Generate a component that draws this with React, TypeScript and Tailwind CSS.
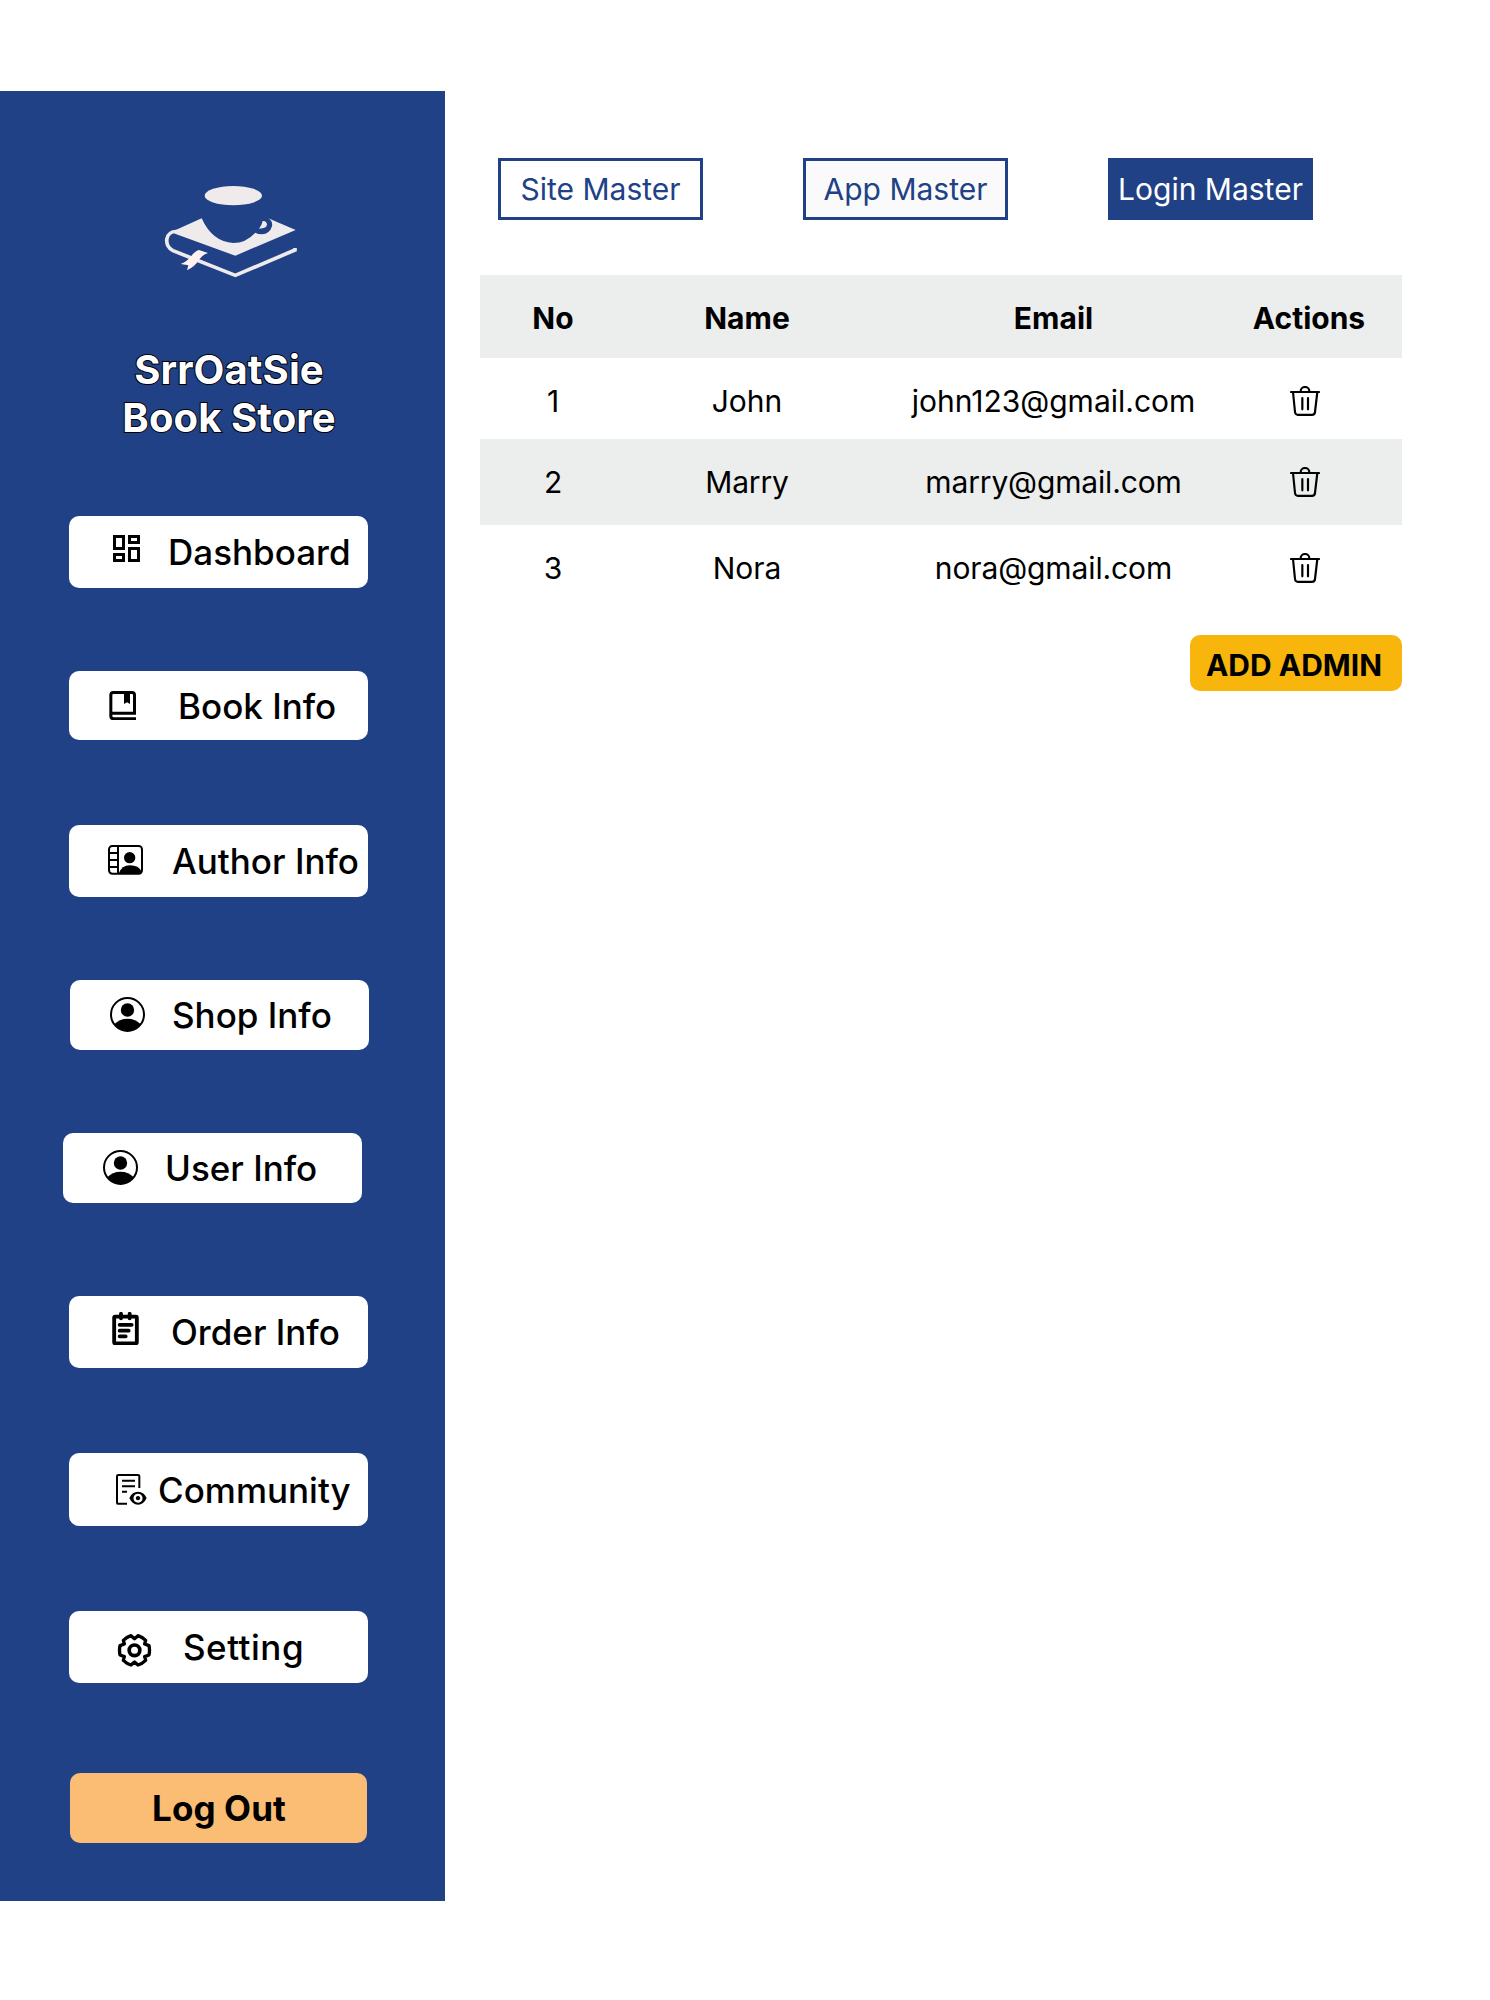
import type { ReactNode } from 'react';

function Logo() {
  return (
    <svg viewBox="0 0 411 291" className="ml-[163px] mt-[93px] h-[97px] w-[137px] shrink-0" fill="#efebec">
      <ellipse cx="211" cy="35" rx="86" ry="29" />
      <path d="M116 103L38 138Q30 142 36 149L217 215L398 138L316 103Q330 112 327 127Q320 150 297 151Q284 151 277 146Q248 177 211 177Q148 174 116 103Z" />
      <path d="M299 111Q310 110 312 121Q312 134 288 134Q296 125 299 111Z" />
      <path d="M45 143C4 138 2 188 30 200L217 274L396 198V192" fill="none" stroke="#efebec" strokeWidth="11" />
      <path d="M108 198L135 207Q118 212 107 228Q98 246 72 259L76 244L53 240Q74 231 85 216Q95 202 108 198Z" fill="#fff2f1" />
    </svg>
  );
}

function DashboardIcon() {
  return (
    <svg viewBox="3 3 18 18" className="h-[27px] w-[27px]">
      <path d="M19 5v2h-4V5h4M9 5v6H5V5h4m10 8v6h-4v-6h4M9 17v2H5v-2h4M21 3h-8v6h8V3zM11 3H3v10h8V3zm10 8h-8v10h8V11zm-10 4H3v6h8v-6z" />
    </svg>
  );
}

function BookIcon() {
  return (
    <svg viewBox="0 0 81 90" className="h-[30px] w-[27px]">
      <path d="M81 86H13Q5.500 86 5.500 78V15Q5.500 7.500 13 7.500H69Q76.500 7.500 76.500 15V69.500H6" fill="none" stroke="black" strokeWidth="9" />
      <path d="M45 8h18v34l-9 -5l-9 5z" />
    </svg>
  );
}

function AuthorIcon() {
  return (
    <svg viewBox="0 0 105 90" className="h-[30px] w-[35px]">
      <g fill="none" stroke="black" strokeWidth="6">
        <rect x="3" y="3" width="99" height="83" rx="10" />
        <path d="M30 3V86M2 24H30M2 45H30M2 66H30" />
      </g>
      <circle cx="65" cy="38" r="17" />
      <path d="M32 86Q41 61 66 61Q92 61 101 80L94 87Z" />
    </svg>
  );
}

function PersonIcon() {
  return (
    <svg viewBox="0 0 105 105" className="h-[35px] w-[35px]">
      <circle cx="52.500" cy="52.500" r="49.500" fill="none" stroke="black" strokeWidth="6" />
      <circle cx="52.500" cy="39" r="20" />
      <path d="M13 82Q28 65 52.500 65Q77 65 92 82A50 50 0 0 1 13 82Z" />
    </svg>
  );
}

function OrderIcon() {
  return (
    <svg viewBox="0 0 81 99" className="h-[33px] w-[27px]" fill="none" stroke="black" strokeWidth="11.500" strokeLinecap="round">
      <rect x="6.500" y="14" width="68" height="80" rx="3" />
      <path d="M27 5.500V19M53 5.500V19M23 38.500H59M23 56H50M23 73H41" />
    </svg>
  );
}

function CommunityIcon() {
  return (
    <svg viewBox="0 0 93 93" className="h-[31px] w-[31px]">
      <path d="M33 89.500H7Q3 89.500 3 86V6Q3 3 7 3H66Q70 3 70 6V42M18 20.500H57M18 37H57M18 53.500H33" fill="none" stroke="black" strokeWidth="6" />
      <path fillRule="evenodd" d="M40 72Q49 53 66 53Q83 53 92 72Q83 92 66 92Q49 92 40 72ZM66 59a13.500 13.500 0 1 0 .1 0ZM66 66a6.500 6.500 0 1 1 -.1 0Z" />
    </svg>
  );
}

function SettingIcon() {
  return (
    <svg viewBox="0 0 105 102" className="h-[34px] w-[35px]" fill="none" stroke="black" strokeWidth="10" strokeLinejoin="round">
      <path d="M96 35Q99 49 96 63L83 68L86 79Q76 89 63 93L52.500 84L42 93Q29 89 19 79L22 68L9 63Q6 49 9 35L22 30L19 19Q29 9 42 5L52.500 14L63 5Q76 9 86 19L83 30Z" />
      <circle cx="52.500" cy="49" r="16" strokeWidth="11" />
    </svg>
  );
}

function TrashIcon() {
  return (
    <svg viewBox="0 0 90 90" className="h-[30px] w-[30px]" fill="none" stroke="black" strokeWidth="6.500" strokeLinecap="round">
      <path d="M3 18H87M32 16a13 13 0 0 1 26 0M9 18L15 78Q16 86.500 24 86.500H66Q74 86.500 75 78L82 18M37 36V70M54 36V70" />
    </svg>
  );
}

type NavItemProps = {
  box: string;
  iconPlace: string;
  labelPlace: string;
  icon: ReactNode;
  label: string;
};

function NavItem({ box, iconPlace, labelPlace, icon, label }: NavItemProps) {
  return (
    <a className={`flex w-[299px] shrink-0 items-center rounded-[10px] bg-white ${box}`}>
      <span className={`shrink-0 self-start ${iconPlace}`}>{icon}</span>
      <span className={`whitespace-nowrap text-[35px] font-medium ${labelPlace}`}>{label}</span>
    </a>
  );
}

const navItems: NavItemProps[] = [
  { label: 'Dashboard', icon: <DashboardIcon />, box: 'ml-[69px] mt-[75px] h-[72px]', iconPlace: 'ml-[44px] mt-[19px]', labelPlace: 'ml-7' },
  { label: 'Book Info', icon: <BookIcon />, box: 'ml-[69px] mt-[83px] h-[69px]', iconPlace: 'ml-[40px] mt-[19px]', labelPlace: 'ml-[42px] pt-px' },
  { label: 'Author Info', icon: <AuthorIcon />, box: 'ml-[69px] mt-[85px] h-[72px]', iconPlace: 'ml-[39px] mt-[20px]', labelPlace: 'ml-[29px]' },
  { label: 'Shop Info', icon: <PersonIcon />, box: 'ml-[70px] mt-[83px] h-[70px]', iconPlace: 'ml-[40px] mt-[17px]', labelPlace: 'ml-[27px]' },
  { label: 'User Info', icon: <PersonIcon />, box: 'ml-[63px] mt-[83px] h-[70px]', iconPlace: 'ml-[40px] mt-[17px]', labelPlace: 'ml-[27px]' },
  { label: 'Order Info', icon: <OrderIcon />, box: 'ml-[69px] mt-[93px] h-[72px]', iconPlace: 'ml-[43px] mt-[16px]', labelPlace: 'ml-[32px]' },
  { label: 'Community', icon: <CommunityIcon />, box: 'ml-[69px] mt-[85px] h-[73px]', iconPlace: 'ml-[47px] mt-[21px]', labelPlace: 'ml-[11px] pt-px' },
  { label: 'Setting', icon: <SettingIcon />, box: 'ml-[69px] mt-[85px] h-[72px]', iconPlace: 'ml-[48px] mt-[23px]', labelPlace: 'ml-[31px] tracking-[0.5px]' },
];

const admins = [
  { no: 1, name: 'John', email: 'john123@gmail.com', row: 'h-[81px] pt-[5px]' },
  { no: 2, name: 'Marry', email: 'marry@gmail.com', row: 'h-[86px] bg-[#eceeed] tracking-[-0.15px]' },
  { no: 3, name: 'Nora', email: 'nora@gmail.com', row: 'h-[86px] tracking-[-0.12px]' },
];

export default function App() {
  return (
    <div className="flex h-[2000px] w-[1490px] items-start bg-white pt-[91px] font-['Inter',sans-serif] text-black">
      <aside className="flex h-[1810px] w-[445px] shrink-0 flex-col items-start bg-[#204186]">
        <Logo />
        <h1 className="mt-[65px] mb-[-1px] w-[458px] shrink-0 text-center text-[40px] leading-[48px] font-bold tracking-[0.1px] text-white [-webkit-text-stroke:2px_black] [paint-order:stroke_fill]">
          SrrOatSie
          <br />
          Book Store
        </h1>
        {navItems.map((item) => (
          <NavItem key={item.label} {...item} />
        ))}
        <button className="ml-[70px] mt-[90px] flex h-[70px] w-[297px] shrink-0 items-center rounded-[10px] bg-[#fbbc74] pl-[82px] text-[35px] font-bold tracking-[0.1px]">
          Log Out
        </button>
      </aside>

      <main className="ml-[35px] flex w-[922px] flex-col pt-[67px]">
        <div className="flex gap-[100px] pl-[18px] text-[30px] text-[#204186]">
          <button className="h-[62px] w-[205px] border-3 border-[#204186] bg-white whitespace-nowrap">Site Master</button>
          <button className="h-[62px] w-[205px] border-3 border-[#204186] bg-[#fafafb] whitespace-nowrap">App Master</button>
          <button className="h-[62px] w-[205px] bg-[#204186] whitespace-nowrap text-white">Login Master</button>
        </div>

        <div className="mt-[55px] text-center text-[30px]">
          <div className="grid h-[83px] grid-cols-[146px_242px_371px_140px] items-center bg-[#eceeed] pt-1 font-bold">
            <span>No</span>
            <span>Name</span>
            <span>Email</span>
            <span>Actions</span>
          </div>
          {admins.map((admin) => (
            <div key={admin.no} className={`grid grid-cols-[146px_242px_371px_140px] items-center ${admin.row}`}>
              <span>{admin.no}</span>
              <span>{admin.name}</span>
              <span>{admin.email}</span>
              <button className="flex justify-center pr-2">
                <TrashIcon />
              </button>
            </div>
          ))}
        </div>

        <button className="mt-6 flex h-14 w-[212px] items-center justify-center self-end rounded-[10px] bg-[#f8b60c] pt-1 pr-1 text-[30px] font-bold whitespace-nowrap">
          ADD ADMIN
        </button>
      </main>
    </div>
  );
}
